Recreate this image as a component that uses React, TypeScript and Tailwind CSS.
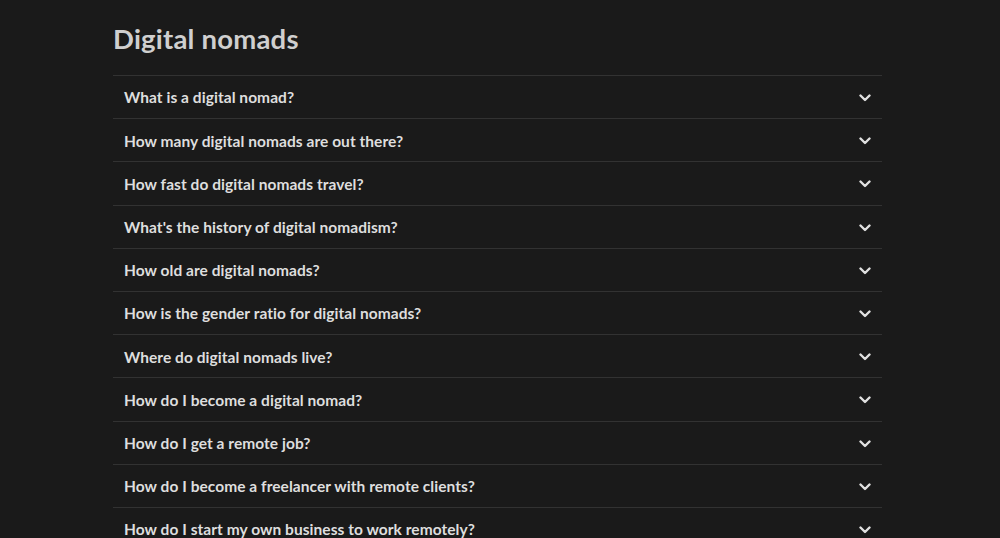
import React from "react";

const items = [
  "What is a digital nomad?",
  "How many digital nomads are out there?",
  "How fast do digital nomads travel?",
  "What's the history of digital nomadism?",
  "How old are digital nomads?",
  "How is the gender ratio for digital nomads?",
  "Where do digital nomads live?",
  "How do I become a digital nomad?",
  "How do I get a remote job?",
  "How do I become a freelancer with remote clients?",
  "How do I start my own business to work remotely?",
];

function Chevron() {
  return (
    <svg width="12" height="8" viewBox="0 0 12 8" fill="none">
      <path d="M1.5 1.5L6 6L10.5 1.5" stroke="#e0e0e0" strokeWidth="2.4" strokeLinecap="round" strokeLinejoin="round" />
    </svg>
  );
}

export default function App() {
  return (
    <div className="w-[1000px] h-[538px] overflow-hidden bg-[#1a1a1a]" style={{ fontFamily: "Lato, 'Open Sans', sans-serif" }}>
      <div className="ml-[113px] w-[769px] pt-[23px]">
        <h1 className="text-[27.5px] leading-[32px] font-bold text-[#cfcfcf] tracking-[0.2px] mb-[20px]">Digital nomads</h1>
        <div>
          {items.map((q) => (
            <div key={q} className="h-[43.2px] border-t border-[#323232] flex items-center justify-between pl-[11px] pr-[11px] pt-[2px]">
              <span className="text-[15.5px] font-bold text-[#dedede] tracking-[0.05px]">{q}</span>
              <Chevron />
            </div>
          ))}
        </div>
      </div>
    </div>
  );
}
